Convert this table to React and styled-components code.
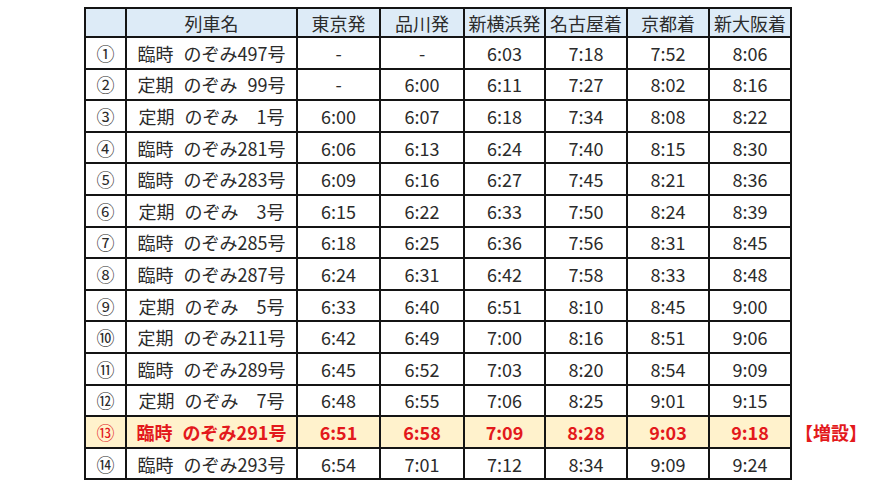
import React from 'react';
import styled, { createGlobalStyle } from 'styled-components';

const GlobalStyle = createGlobalStyle`
  html, body {
    margin: 0;
    padding: 0;
    background: #ffffff;
  }
  body {
    font-family: "Noto Sans CJK JP", "Noto Sans", sans-serif;
  }
`;

const headers = ['', '列車名', '東京発', '品川発', '新横浜発', '名古屋着', '京都着', '新大阪着'];

const trains = [
  ['①', '臨時 のぞみ497号', '-', '-', '6:03', '7:18', '7:52', '8:06'],
  ['②', '定期 のぞみ 99号', '-', '6:00', '6:11', '7:27', '8:02', '8:16'],
  ['③', '定期 のぞみ　1号', '6:00', '6:07', '6:18', '7:34', '8:08', '8:22'],
  ['④', '臨時 のぞみ281号', '6:06', '6:13', '6:24', '7:40', '8:15', '8:30'],
  ['⑤', '臨時 のぞみ283号', '6:09', '6:16', '6:27', '7:45', '8:21', '8:36'],
  ['⑥', '定期 のぞみ　3号', '6:15', '6:22', '6:33', '7:50', '8:24', '8:39'],
  ['⑦', '臨時 のぞみ285号', '6:18', '6:25', '6:36', '7:56', '8:31', '8:45'],
  ['⑧', '臨時 のぞみ287号', '6:24', '6:31', '6:42', '7:58', '8:33', '8:48'],
  ['⑨', '定期 のぞみ　5号', '6:33', '6:40', '6:51', '8:10', '8:45', '9:00'],
  ['⑩', '定期 のぞみ211号', '6:42', '6:49', '7:00', '8:16', '8:51', '9:06'],
  ['⑪', '臨時 のぞみ289号', '6:45', '6:52', '7:03', '8:20', '8:54', '9:09'],
  ['⑫', '定期 のぞみ　7号', '6:48', '6:55', '7:06', '8:25', '9:01', '9:15'],
  ['⑬', '臨時 のぞみ291号', '6:51', '6:58', '7:09', '8:28', '9:03', '9:18'],
  ['⑭', '臨時 のぞみ293号', '6:54', '7:01', '7:12', '8:34', '9:09', '9:24'],
];

const addedIndex = 12;

const Page = styled.div`
  display: flex;
  align-items: flex-start;
  padding: 7px 0 0 84px;
`;

const Table = styled.div`
  display: grid;
  grid-template-columns: 39px 169px 81px 82px 79px 80px 80px 80px;
  grid-template-rows: 27px repeat(14, 29.6px);
  gap: 2px;
  padding: 2px;
  background: #141414;
`;

// half-width spaces in the names are as wide as a digit in the original sheet
const Cell = styled.div`
  display: flex;
  align-items: center;
  justify-content: center;
  white-space: pre;
  word-spacing: 6px;
  font-size: 18px;
  line-height: 1;
  color: ${(p) => (p.$added ? '#e3191c' : '#2b2b2b')};
  font-weight: ${(p) => (p.$bold ? 700 : 400)};
  background: ${(p) => {
    if (p.$head) return '#ddebf7';
    if (p.$added) return '#fff2cc';
    return '#ffffff';
  }};
`;

const Notes = styled.div`
  display: grid;
  grid-template-rows: 27px repeat(14, 29.6px);
  gap: 2px;
  padding: 2px 0 2px 3px;
`;

const AddedNote = styled.div`
  grid-row: ${(p) => p.$row};
  display: flex;
  align-items: center;
  font-size: 18px;
  font-weight: 700;
  line-height: 1;
  color: #e3191c;
  white-space: nowrap;
`;

export default function App () {
  return (
    <>
      <GlobalStyle />
      <Page>
        <Table>
          {headers.map((h, i) => (
            <Cell key={`h${i}`} $head>{h}</Cell>
          ))}
          {trains.map((row, r) => row.map((value, c) => (
            <Cell
              key={`${r}-${c}`}
              $added={r === addedIndex}
              $bold={r === addedIndex && c > 0}
            >
              {value}
            </Cell>
          )))}
        </Table>
        <Notes>
          <AddedNote $row={addedIndex + 2}>【増設】</AddedNote>
        </Notes>
      </Page>
    </>
  );
}
